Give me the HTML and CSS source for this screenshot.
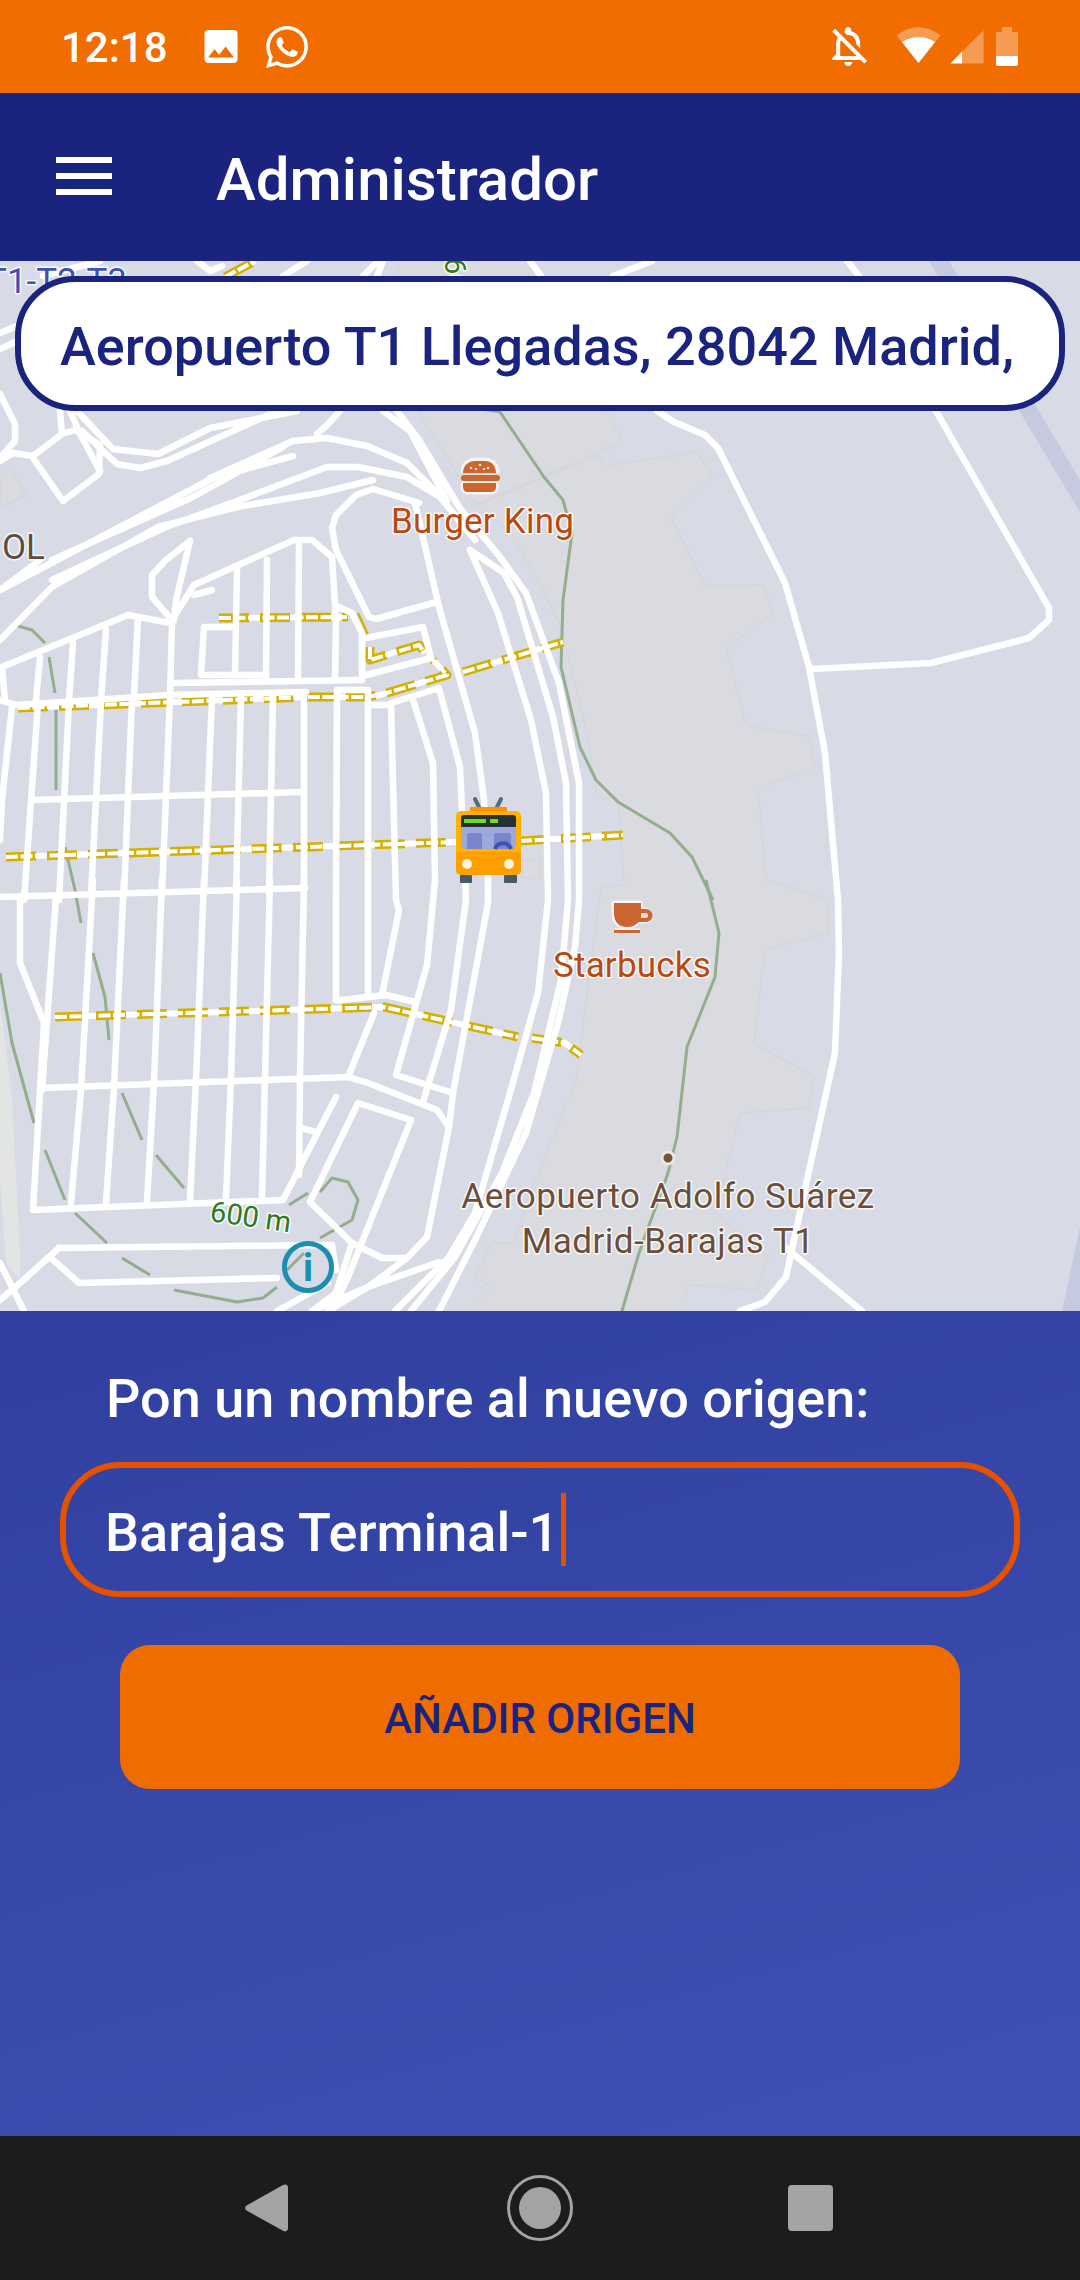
FILE: index.html
```html
<!DOCTYPE html>
<html lang="es">
<head>
<meta charset="utf-8">
<title>Administrador</title>
<link rel="stylesheet" href="styles.css">
</head>
<body>
<div class="screen">
  <header class="status">
    <span class="time">12:18</span>
    <svg class="ic-image" viewBox="3 3 18 18"><path d="M21 19V5c0-1.1-.9-2-2-2H5c-1.100 0-2 .9-2 2v14c0 1.100.9 2 2 2h14c1.100 0 2-.9 2-2zM8.500 13.500l2.500 3.010L14.500 12l4.500 6H5l3.500-4.500z"/></svg>
    <svg class="ic-wa" viewBox="0 0 24 24"><path d="M17.472 14.382c-.297-.149-1.758-.867-2.03-.967-.273-.099-.471-.148-.67.15-.197.297-.767.966-.94 1.164-.173.199-.347.223-.644.075-.297-.15-1.255-.463-2.39-1.475-.883-.788-1.48-1.761-1.653-2.059-.173-.297-.018-.458.13-.606.134-.133.298-.347.446-.52.149-.174.198-.298.298-.497.099-.198.05-.371-.025-.52-.075-.149-.669-1.612-.916-2.207-.242-.579-.487-.5-.669-.51-.173-.008-.371-.01-.57-.01-.198 0-.52.074-.792.372-.272.297-1.04 1.016-1.04 2.479 0 1.462 1.065 2.875 1.213 3.074.149.198 2.096 3.2 5.077 4.487.709.306 1.262.489 1.694.625.712.227 1.36.195 1.871.118.571-.085 1.758-.719 2.006-1.413.248-.694.248-1.289.173-1.413-.074-.124-.272-.198-.57-.347m-5.421 7.403h-.004a9.87 9.87 0 01-5.031-1.378l-.361-.214-3.741.982.998-3.648-.235-.374a9.86 9.86 0 01-1.51-5.26c.001-5.45 4.436-9.884 9.888-9.884 2.64 0 5.122 1.03 6.988 2.898a9.825 9.825 0 012.893 6.994c-.003 5.45-4.437 9.884-9.885 9.884m8.413-18.297A11.815 11.815 0 0012.05 0C5.495 0 .16 5.335.157 11.892c0 2.096.547 4.142 1.588 5.945L.057 24l6.305-1.654a11.882 11.882 0 005.683 1.448h.005c6.554 0 11.89-5.335 11.893-11.893a11.821 11.821 0 00-3.48-8.413Z"/></svg>
    <span class="status-gap"></span>
    <svg class="ic-bell" viewBox="3.4 2.500 18 19.500"><path d="M12 22c1.100 0 2-.9 2-2h-4c0 1.100.9 2 2 2zM12 6.500c2.490 0 4 2.020 4 4.500v.1l2 2V11c0-3.070-1.630-5.640-4.500-6.320V4c0-.83-.67-1.500-1.500-1.500s-1.500.67-1.500 1.500v.68c-.24.06-.47.15-.69.23l1.640 1.640c.18-.02.36-.05.55-.05zM5.410 3.350L4 4.760l2.810 2.810C6.290 8.570 6 9.740 6 11v5l-2 2v1h14.240l1.740 1.740 1.410-1.410L5.410 3.350zM16 17H8v-6c0-.68.12-1.320.34-1.900L16 16.760V17z"/></svg>
    <svg class="ic-wifi" viewBox="0 0 45 36"><path class="dim" d="M0.500 8.500Q22.500-8 44.500 8.500L22.500 36Z"/><path d="M6 15Q22.500 5 39 15L22.500 36Z"/></svg>
    <svg class="ic-signal" viewBox="0 0 34 34"><path class="dim" d="M33.500 0.500V33.500H12V21.500Z"/><path d="M12 21.500V33.500H0.500Z"/></svg>
    <svg class="ic-batt" viewBox="0 0 22 39"><path class="dim" d="M6 0H16V5H22V29H0V5H6Z"/><path d="M0 29H22V37a2 2 0 0 1-2 2H2a2 2 0 0 1-2-2Z"/></svg>
  </header>

  <nav class="appbar">
    <div class="burger"><i></i><i></i><i></i></div>
    <h1 class="title">Administrador</h1>
  </nav>

  <section class="map">
    <svg class="map-svg" viewBox="0 261 1080 1050">
      <g class="areas">
        <polygon points="397,261 530,261 606,411 623,442 476,505 419,412"/>
        <polygon points="600,455 605,466 697,452 712,475 671,517 705,586 763,585 774,613 726,647 746,726 809,736 815,767 758,789 766,880 828,900 829,933 765,949 754,1043 814,1077 809,1108 740,1113 715,1213 769,1257 757,1290 688,1285 679,1311 470,1311 491,1287 475,1277 491,1243 515,1243 529,1197 576,1080 601,887 624,885 618,797 597,797 587,733 561,627 539,583 511,533 476,505"/>
        <polygon points="0,478 10,468 26,495 0,508"/>
        <rect x="522" y="860" width="18" height="18"/>
        <polygon class="pale" points="0,1000 12,1097 20,1257 20,1280 6,1263 0,1180"/>
      </g>
      <polygon class="stripe" points="1062,1311 1080,1227 1080,1311"/>
      <polygon class="stripe" points="929,261 949,261 1080,480 1080,512"/>

      <g class="contour">
        <polyline points="431,400 500,412 544,477 563,500 572,533 563,600 561,667 580,747 596,780 618,802 670,833 692,857 713,900"/>
        <polyline points="706,880 719,933 715,977 687,1047 677,1137 668,1173 639,1253 622,1311"/>
        <polyline points="18,626 32,630 45,643"/>
        <polyline points="49,657 55,693"/>
        <polyline points="56,707 56,790"/>
        <polyline points="65,847 75,890 81,923"/>
        <polyline points="93,953 105,997 109,1040"/>
        <polyline points="122,1093 142,1140"/>
        <polyline points="156,1155 184,1188"/>
        <polyline points="0,973 12,1043 34,1123"/>
        <polyline points="45,1150 65,1200"/>
        <polyline points="75,1213 107,1243"/>
        <polyline points="122,1258 150,1275"/>
        <polyline points="174,1290 237,1302 263,1298 277,1287"/>
        <polyline points="287,1270 304,1253"/>
        <polyline points="320,1238 352,1220 358,1200 348,1182 332,1178 320,1192"/>
        <polyline points="308,1193 289,1205"/>
      </g>

      <defs>
        <polyline id="r1" class="rp" points="219,618 348,617"/>
        <polyline id="r2" class="rp" points="370,647 370,660 419,645 425,653"/>
        <polyline id="r3" class="rp" points="18,708 308,697 364,697 380,695 447,675 433,660"/>
        <polyline id="r3b" class="rp" points="463,672 563,642"/>
        <polyline id="r4" class="rp" points="6,857 457,842"/>
        <polyline id="r4b" class="rp" points="520,841 623,835"/>
        <polyline id="r5" class="rp" points="55,1017 384,1007 518,1037"/>
        <polyline id="r5b" class="rp" points="532,1038 565,1043 581,1055"/>
        <polyline id="r6" class="rp" points="225,277 255,261"/>
      </defs>
      <g class="rail-base"><use href="#r1"/><use href="#r2"/><use href="#r3"/><use href="#r3b"/><use href="#r4"/><use href="#r4b"/><use href="#r5"/><use href="#r5b"/><use href="#r6"/></g>
      <g class="rail-yellow"><use href="#r1"/><use href="#r2"/><use href="#r3"/><use href="#r3b"/><use href="#r4"/><use href="#r4b"/><use href="#r5"/><use href="#r5b"/><use href="#r6"/></g>
      <g class="rail-white"><use href="#r1"/><use href="#r2"/><use href="#r3"/><use href="#r3b"/><use href="#r4"/><use href="#r4b"/><use href="#r5"/><use href="#r5b"/><use href="#r6"/></g>
      <polyline class="rail-thin" points="358,613 368,635"/>

      <g class="roads">
        <!-- top strip, above the pill -->
        <polyline points="43,276 100,261"/><polyline points="197,261 210,271 222,266"/><polyline points="283,276 307,261"/><polyline points="363,276 378,261"/><polyline points="377,276 383,261"/>
        <polyline points="530,261 541,276"/><polyline points="613,276 652,261"/><polyline points="847,261 859,276"/>
        <!-- top left junctions -->
        <polyline points="0,333 17,326"/><polyline points="0,349 17,341"/>
        <polyline points="60,411 62,434 33,456 13,453 0,461"/>
        <polyline points="0,394 15,424 15,441 0,458"/>
        <polyline points="33,458 63,501 99,474 100,445 75,430 62,434"/>
        <polyline points="70,411 80,434 100,471"/>
        <polyline points="77,411 113,449 158,454 210,428 297,411"/>
        <polyline points="82,431 117,464 140,468 167,461 277,411"/>
        <polyline points="340,411 328,424 317,434"/>
        <polyline points="383,411 410,431 447,501"/>
        <polyline points="293,456 213,478 0,590"/>
        <polyline points="210,478 293,441 327,438 367,446 407,463 443,499"/>
        <polyline points="0,640 52,587 158,527 237,507 320,493 373,480"/>
        <polyline points="52,580 166,527 237,501 327,467 358,467 407,477 440,497 475,540"/>
        <polyline points="52,560 193,497 283,447"/>
        <polyline points="40,560 0,590"/>
        <!-- upper grid -->
        <polyline points="5,700 2,667 128,615 170,623"/>
        <polyline points="40,657 36,700"/><polyline points="73,643 69,700"/><polyline points="106,630 101,700"/><polyline points="138,618 134,697"/><polyline points="172,623 170,695"/>
        <polyline points="170,618 152,597 152,575 166,560 190,541"/>
        <polyline points="190,541 176,600 174,620"/>
        <polyline points="172,620 194,585 294,540 312,540 332,557 336,620 335,680"/>
        <polyline points="194,595 212,590"/>
        <polyline points="237,570 235,673"/><polyline points="267,560 266,678"/><polyline points="299,542 298,678"/>
        <polyline points="336,606 352,613 362,633 362,680"/>
        <polyline points="174,683 362,680"/>
        <polyline points="232,627 204,627 201,675 263,675"/>
        <polyline points="332,528 336,550 369,617 376,619 433,603"/>
        <polyline points="332,528 336,515 356,495 373,489 403,498 419,503"/>
        <polyline points="366,638 423,627 431,658 366,675"/>
        <polyline points="415,503 439,607 475,733 484,800 488,880"/>
        <polyline points="470,550 498,613 531,720 546,793 548,900"/>
        <polyline points="470,550 504,573 517,597 553,717 566,783 568,900"/>
        <polyline points="397,411 419,440 459,507 486,540 500,557 526,593 559,683 579,783 579,900"/>
        <!-- middle grid -->
        <polyline points="0,700 16,705 170,695 306,692"/>
        <polyline points="12,707 2,800 0,840"/>
        <polyline points="38,703 24,900"/><polyline points="69,703 59,900"/><polyline points="101,703 91,895"/><polyline points="132,700 124,895"/><polyline points="170,697 162,895"/><polyline points="212,697 204,893"/><polyline points="241,697 236,893"/><polyline points="273,697 269,893"/><polyline points="304,692 304,890"/>
        <polyline points="337,690 336,900 336,1000 342,1000"/>
        <polyline points="337,690 368,690 368,995"/>
        <polyline points="368,705 391,705"/>
        <polyline points="391,705 396,900 399,910 382,995"/>
        <polyline points="391,703 439,688 460,767 466,900"/>
        <polyline points="413,700 433,763 435,880 427,965 396,1075 453,1093"/>
        <polyline points="33,800 300,792"/>
        <!-- lower grid -->
        <polyline points="0,897 305,888"/>
        <polyline points="20,897 20,963 44,1023 33,1210 283,1200 336,1097"/>
        <polyline points="56,897 42,1090"/><polyline points="93,880 81,1090 71,1203"/><polyline points="124,880 114,1087 106,1203"/><polyline points="162,880 154,1082 147,1202"/><polyline points="204,880 196,1080 190,1200"/><polyline points="237,880 231,1078 226,1198"/><polyline points="270,880 265,1077 262,1198"/><polyline points="304,880 300,1077 299,1175"/>
        <polyline points="42,1088 348,1077 368,1083 437,1110 449,1127"/>
        <polyline points="302,1128 316,1132"/>
        <polyline points="348,1077 374,1013"/>
        <polyline points="336,1000 342,1000 386,995 415,1002"/>
        <polyline points="466,900 451,1010 423,1102"/>
        <polyline points="488,880 488,903 453,1093 449,1127 427,1237 407,1258 382,1258 352,1243 310,1202 358,1103 411,1120 348,1277 332,1311"/>
        <polyline points="548,900 538,993 510,1093 475,1213 449,1257 395,1311"/>
        <polyline points="568,900 561,980 534,1093 502,1173 455,1257 411,1311"/>
        <polyline points="579,900 575,947 558,1023 526,1133 475,1240 439,1311"/>
        <polyline points="59,1248 332,1245 336,1270"/>
        <polyline points="59,1248 20,1283 0,1300"/>
        <polyline points="51,1258 79,1283 277,1278"/>
        <polyline points="0,1263 12,1287 24,1311"/>
        <polyline points="439,1262 368,1287 328,1311"/>
        <polyline points="407,1258 368,1287 312,1311"/>
        <polyline points="352,1243 336,1293 312,1311"/>
        <polyline points="277,1311 328,1283"/>
        <!-- far right -->
        <polyline points="657,411 674,422 705,435 718,448 785,583 809,667 825,753 838,900 839,952 835,1053 807,1180 786,1277 765,1302 740,1311"/>
        <polyline points="785,1247 862,1311"/>
        <polyline points="936,411 1049,608 1049,620 1029,638 931,663 812,669"/>
      </g>

      <g class="labels">
        <text class="poi" x="391" y="533">Burger King</text>
        <text class="poi" x="553" y="977">Starbucks</text>
        <text class="place" x="668" y="1208">Aeropuerto Adolfo Suárez</text>
        <text class="place" x="668" y="1253">Madrid-Barajas T1</text>
        <text class="ol" x="2" y="559">OL</text>
        <text class="terminal" x="-14" y="293">T1-T2-T3</text>
        <text class="contour-label" transform="translate(209 1221) rotate(8)">600 m</text>
        <text class="contour-label" transform="translate(445 258) rotate(90)">600</text>
      </g>

      <circle class="dot" cx="668" cy="1158" r="6"/>

      <g class="info">
        <circle cx="308" cy="1267" r="23.500"/>
        <text x="308" y="1281">i</text>
      </g>

      <g class="burger-poi">
        <path class="poi-halo" d="M463 473c0-9 6-13 12-13h10c6 0 12 4 12 13M462 478h37M463 484h33v3c0 3-2 5-5 5h-23c-3 0-5-2-5-5Z"/>
        <path d="M463 473c0-8 6-12 12-12h10c6 0 11 4 11 12ZM464 475h33a3 3 0 0 1 0 6H464a3 3 0 0 1 0-6ZM463 483h33v4c0 3-2 5-5 5H468c-3 0-5-2-5-5Z"/>
        <circle class="seed" cx="471" cy="468" r="1.300"/><circle class="seed" cx="480" cy="465" r="1.300"/><circle class="seed" cx="488" cy="468" r="1.300"/><circle class="seed" cx="476" cy="469" r="1.200"/><circle class="seed" cx="484" cy="469" r="1.200"/>
      </g>

      <g class="cup-poi">
        <path class="poi-halo" d="M614 903H640V910H646A6 6 0 0 1 646 921H638C636 925 632 927 627 927C618 927 614 921 614 913ZM615 931H640"/>
        <path d="M614 903H641V909H646A6.500 6.500 0 0 1 646 922H639C636 925 632 927 627 927C618 927 614 921 614 913ZM641 913V918H645.500A2.500 2.500 0 0 0 645.500 913ZM614 930H640V933H614Z"/>
      </g>

      <g class="bus">
        <path class="pole" d="M475 799L479 807M501 799L497 807"/>
        <rect class="bus-roof" x="470" y="807" width="37" height="6" rx="1"/>
        <rect class="bus-body" x="456" y="811" width="65" height="64" rx="5"/>
        <path class="bus-low" d="M456 852H521V870a5 5 0 0 1-5 5H461a5 5 0 0 1-5-5Z"/>
        <path class="bus-window" d="M461 826H516V845a4 4 0 0 1-4 4H465a4 4 0 0 1-4-4Z"/>
        <path class="bus-dark" d="M464 815H513a3 3 0 0 1 3 3V827H461V818a3 3 0 0 1 3-3Z"/>
        <rect class="bus-led" x="464" y="819" width="22" height="4"/>
        <rect class="bus-led" x="490" y="819" width="8" height="4"/>
        <path class="bus-seat" d="M469 833H480a2 2 0 0 1 2 2V849H467V835a2 2 0 0 1 2-2ZM496 833H509a2 2 0 0 1 2 2V849H494V835a2 2 0 0 1 2-2Z"/>
        <path class="bus-wheel-arc" d="M495 849A8.500 8.500 0 0 1 511 849"/>
        <circle class="bus-light" cx="467" cy="864" r="5"/>
        <circle class="bus-light" cx="509" cy="864" r="5"/>
        <rect class="bus-tyre" x="460" y="875" width="12" height="8" rx="1"/>
        <rect class="bus-tyre" x="504" y="875" width="13" height="8" rx="1"/>
      </g>
    </svg>

    <div class="search-pill">Aeropuerto T1 Llegadas, 28042 Madrid,</div>
  </section>

  <section class="panel">
    <p class="panel-label">Pon un nombre al nuevo origen:</p>
    <div class="field"><span class="field-text">Barajas Terminal-1</span><span class="caret"></span></div>
    <button class="add-btn" type="button">AÑADIR ORIGEN</button>
  </section>

  <footer class="navbar">
    <svg class="nav-back" viewBox="0 0 43 48"><path d="M40 0.500a3 3 0 0 1 3 3V44.500a3 3 0 0 1-4.500 2.500L1.500 26.500a3 3 0 0 1 0-5L38 1Z"/></svg>
    <svg class="nav-home" viewBox="0 0 66 66"><circle class="ring" cx="33" cy="33" r="31.500"/><circle cx="33" cy="33" r="21"/></svg>
    <svg class="nav-recent" viewBox="0 0 45 46"><rect width="45" height="46" rx="4"/></svg>
  </footer>
</div>
</body>
</html>
```
FILE: styles.css
```css
* { box-sizing: border-box; }
html, body { margin: 0; padding: 0; }
body { width: 1080px; height: 2280px; overflow: hidden; font-family: Roboto, "Noto Sans", sans-serif; }
.screen { width: 1080px; height: 2280px; display: flex; flex-direction: column; }

/* status bar */
.status { flex: 0 0 93px; background: #f16d00; display: flex; align-items: center; padding: 0 62px 0 61px; color: #fff; }
.status svg { display: block; fill: #fff; flex: none; }
.status .dim { fill: rgba(255, 255, 255, .32); }
.time { font-size: 42px; line-height: 48px; padding-top: 3px; width: 143px; font-weight: 500; }
.ic-image { width: 34px; height: 33px; margin-right: 28px; }
.ic-wa { width: 42px; height: 42px; }
.status-gap { flex: 1; }
.ic-bell { width: 38px; height: 39px; margin-right: 28px; }
.ic-wifi { width: 45px; height: 36px; margin-right: 9px; margin-bottom: 3px; }
.ic-signal { width: 34px; height: 34px; margin-right: 12px; }
.ic-batt { width: 22px; height: 39px; }

/* app bar */
.appbar { flex: 0 0 168px; background: #1a237e; display: flex; align-items: center; padding-left: 56px; }
.burger { width: 56px; display: flex; flex-direction: column; gap: 10px; margin-right: 104px; margin-bottom: 2px; }
.burger i { display: block; height: 6px; background: #fff; }
.title { margin: 0; padding-top: 5px; font-size: 60px; line-height: 70px; font-weight: 500; color: #fff; }

/* map */
.map { flex: 0 0 1050px; position: relative; overflow: hidden; background: #d8dbe6; }
.map-svg { display: block; width: 1080px; height: 1050px; }
.areas polygon, .areas rect { fill: #dadbe0; stroke: #d6d6d8; stroke-width: 1.500; }
.areas .pale { fill: #e3e4e4; stroke: none; }
.stripe { fill: #c5cae0; }
.contour polyline { fill: none; stroke: #93ad8e; stroke-width: 3; stroke-linejoin: round; }
.rp { fill: none; stroke-linejoin: round; }
.rail-base { stroke: #fff; stroke-width: 6; fill: none; }
.rail-yellow { stroke: #d4b000; stroke-width: 9; stroke-dasharray: 30 11; fill: none; }
.rail-white { stroke: #fff; stroke-width: 4; stroke-dasharray: 12 2.500; fill: none; }
.rail-thin { fill: none; stroke: #d4b000; stroke-width: 2.500; }
.roads polyline { fill: none; stroke: #fff; stroke-width: 6.500; stroke-linejoin: round; stroke-linecap: round; }

.labels text { font-family: Roboto, sans-serif; paint-order: stroke; stroke: rgba(255, 255, 255, .85); stroke-width: 3px; stroke-linejoin: round; }
.poi { font-size: 35px; letter-spacing: .2px; fill: #b84a0f; }
.place { font-size: 35px; letter-spacing: .5px; fill: #6b4e3c; text-anchor: middle; }
.ol { font-size: 35px; fill: #5e4d42; }
.terminal { font-size: 35px; fill: #3f51b5; }
.contour-label { font-size: 29px; fill: #2f7a1c; }
.dot { fill: #7a5236; stroke: #e9e9ec; stroke-width: 3; }
.info circle { fill: none; stroke: #1b8fb0; stroke-width: 5; }
.info text { font-family: Roboto, sans-serif; font-weight: 700; font-size: 38px; fill: #1b8fb0; text-anchor: middle; }
.burger-poi, .cup-poi { fill: #cc6630; }
.poi-halo { fill: none; stroke: rgba(255, 255, 255, .7); stroke-width: 5; stroke-linejoin: round; }
.seed { fill: #f3dcc8; }
.pole { stroke: #546e7a; stroke-width: 4; stroke-linecap: round; fill: none; }
.bus-roof { fill: #ff8f00; }
.bus-body { fill: #ffb300; }
.bus-low { fill: #ffa000; }
.bus-window { fill: #9fa8da; }
.bus-dark { fill: #263238; }
.bus-led { fill: #6fdc18; }
.bus-seat { fill: #7986cb; }
.bus-wheel-arc { fill: none; stroke: #3f51b5; stroke-width: 4; }
.bus-light { fill: #fff3e0; }
.bus-tyre { fill: #455a64; }

.search-pill { position: absolute; left: 15px; top: 15px; width: 1050px; height: 135px; border: 6px solid #1a237e; border-radius: 60px; background: #fff; color: #1a237e; font-size: 54px; font-weight: 500; line-height: 129px; padding: 0 0 0 39px; white-space: nowrap; overflow: hidden; }

/* form panel */
.panel { flex: 0 0 825px; background: linear-gradient(165deg, #303f9f 0%, #3f51b5 100%); display: flex; flex-direction: column; align-items: flex-start; padding: 58px 60px 0 60px; }
.panel-label { margin: 0 0 33px 46px; font-size: 54px; line-height: 60px; font-weight: 500; color: #fff; white-space: nowrap; }
.field { width: 960px; height: 135px; border: 6px solid #e65100; border-radius: 60px; display: flex; align-items: center; padding-left: 39px; }
.field-text { font-size: 54px; line-height: 60px; padding-top: 6px; font-weight: 500; color: #fff; }
.caret { width: 5px; height: 73px; background: #e65100; margin-left: 2px; }
.add-btn { align-self: flex-start; margin: 48px 0 0 60px; width: 840px; height: 144px; border: 0; border-radius: 30px; background: #ef6c00; color: #1a237e; font-family: Roboto, sans-serif; font-size: 42px; font-weight: 500; padding: 2px 0 0; }

/* nav bar */
.navbar { flex: 0 0 144px; background: #1c1c1c; display: flex; align-items: center; padding-left: 245px; }
.navbar svg { display: block; flex: none; fill: #a4a4a4; }
.nav-back { width: 43px; height: 48px; margin-right: 219px; }
.nav-home { width: 66px; height: 66px; margin-right: 215px; }
.nav-home .ring { fill: none; stroke: #a4a4a4; stroke-width: 3; }
.nav-recent { width: 45px; height: 46px; }
```
